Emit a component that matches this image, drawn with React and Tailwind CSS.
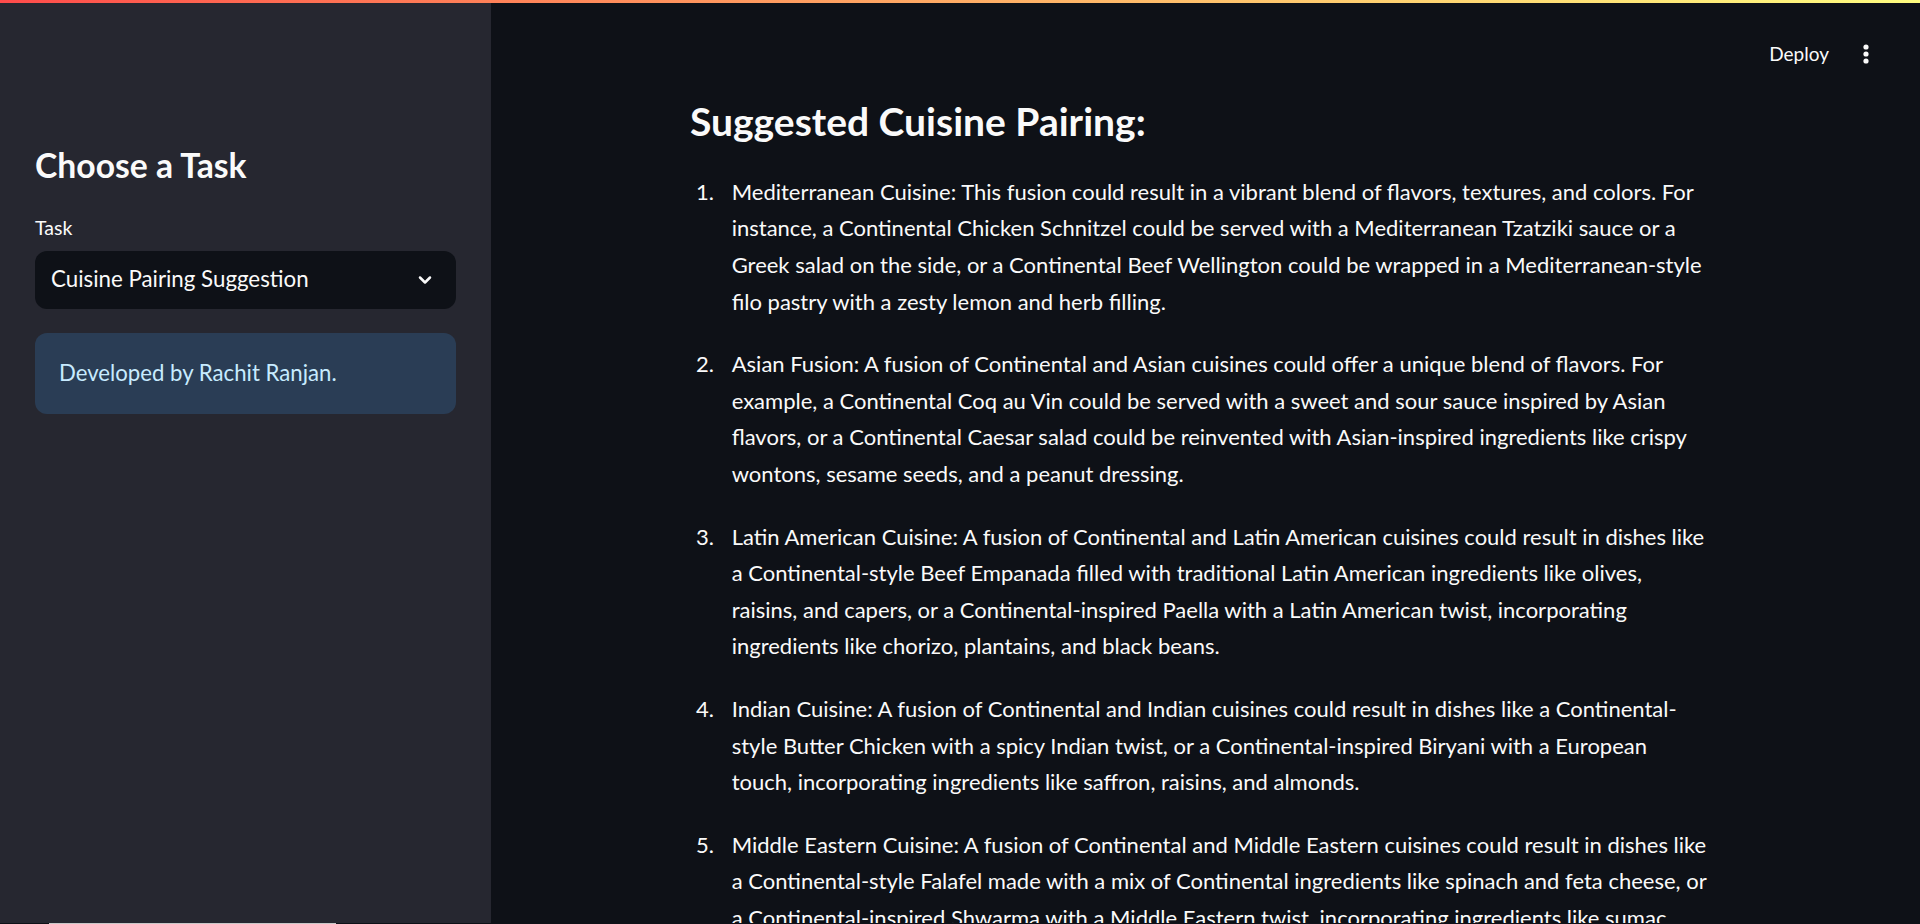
import React from "react";

const items = [
  [
    "Mediterranean Cuisine: This fusion could result in a vibrant blend of flavors, textures, and colors. For",
    "instance, a Continental Chicken Schnitzel could be served with a Mediterranean Tzatziki sauce or a",
    "Greek salad on the side, or a Continental Beef Wellington could be wrapped in a Mediterranean-style",
    "filo pastry with a zesty lemon and herb filling.",
  ],
  [
    "Asian Fusion: A fusion of Continental and Asian cuisines could offer a unique blend of flavors. For",
    "example, a Continental Coq au Vin could be served with a sweet and sour sauce inspired by Asian",
    "flavors, or a Continental Caesar salad could be reinvented with Asian-inspired ingredients like crispy",
    "wontons, sesame seeds, and a peanut dressing.",
  ],
  [
    "Latin American Cuisine: A fusion of Continental and Latin American cuisines could result in dishes like",
    "a Continental-style Beef Empanada filled with traditional Latin American ingredients like olives,",
    "raisins, and capers, or a Continental-inspired Paella with a Latin American twist, incorporating",
    "ingredients like chorizo, plantains, and black beans.",
  ],
  [
    "Indian Cuisine: A fusion of Continental and Indian cuisines could result in dishes like a Continental-",
    "style Butter Chicken with a spicy Indian twist, or a Continental-inspired Biryani with a European",
    "touch, incorporating ingredients like saffron, raisins, and almonds.",
  ],
  [
    "Middle Eastern Cuisine: A fusion of Continental and Middle Eastern cuisines could result in dishes like",
    "a Continental-style Falafel made with a mix of Continental ingredients like spinach and feta cheese, or",
    "a Continental-inspired Shwarma with a Middle Eastern twist, incorporating ingredients like sumac,",
    "pomegranate molasses, and fresh herbs.",
  ],
];

function Chevron() {
  return (
    <svg width="20" height="20" viewBox="0 0 24 24" fill="none" stroke="#fafafa" strokeWidth="3" strokeLinecap="round" strokeLinejoin="round">
      <path d="M6 9l6 6 6-6" />
    </svg>
  );
}

function Kebab() {
  return (
    <svg width="8" height="22" viewBox="0 0 8 22" fill="#fafafa">
      <circle cx="4" cy="4" r="2.6" />
      <circle cx="4" cy="11" r="2.6" />
      <circle cx="4" cy="18" r="2.6" />
    </svg>
  );
}

export default function App() {
  return (
    <div
      className="relative flex h-[924px] w-full overflow-hidden bg-[#0e1117] text-[#fafafa]"
      style={{ fontFamily: "Lato, 'Noto Sans', sans-serif" }}
    >
      <div className="absolute left-0 right-0 top-0 z-10 h-[3px] bg-gradient-to-r from-[#ff4b4b] to-[#fffd80]" />

      <aside className="flex w-[491px] shrink-0 flex-col bg-[#262730] px-[35px] pt-[145px]">
        <h2 className="text-[33.7px] font-bold leading-[1.2]">Choose a Task</h2>
        <label className="mt-[27px] block text-[19.5px] leading-[1.6]">Task</label>
        <div className="mt-[7px] flex h-[58px] items-center justify-between rounded-[12px] bg-[#0e1117] pl-[16px] pr-[21px]">
          <span className="text-[22.3px] leading-[1.2]">Cuisine Pairing Suggestion</span>
          <Chevron />
        </div>
        <div className="mt-[24px] flex h-[81px] items-center rounded-[12px] bg-[#2a3d55] pl-[24px]">
          <span className="text-[22.2px] leading-[1.2] text-[#c7ebff]">Developed by Rachit Ranjan.</span>
        </div>
      </aside>

      <main className="relative flex-1 pl-[199px] pt-[98px]">
        <div className="absolute right-[50px] top-[43px] flex items-center gap-[33px]">
          <span className="text-[19px] leading-[1.2]">Deploy</span>
          <Kebab />
        </div>

        <h3 className="text-[39px] font-bold leading-[1.2]">Suggested Cuisine Pairing:</h3>
        <ol className="ml-[6px] mt-[29px] flex flex-col gap-[26px]">
          {items.map((lines, i) => (
            <li key={i} className="flex text-[22px] leading-[36.6px]">
              <span className="w-[35.7px] shrink-0">{i + 1}.</span>
              <span className="whitespace-nowrap">
                {lines.map((l, j) => (
                  <React.Fragment key={j}>
                    {l}
                    {j < lines.length - 1 && <br />}
                  </React.Fragment>
                ))}
              </span>
            </li>
          ))}
        </ol>
      </main>

      <div className="absolute bottom-0 left-0 right-0 h-px bg-[#0e1117]">
        <div className="ml-[49px] h-px w-[287px] bg-[#c8c8c8]" />
      </div>
    </div>
  );
}
